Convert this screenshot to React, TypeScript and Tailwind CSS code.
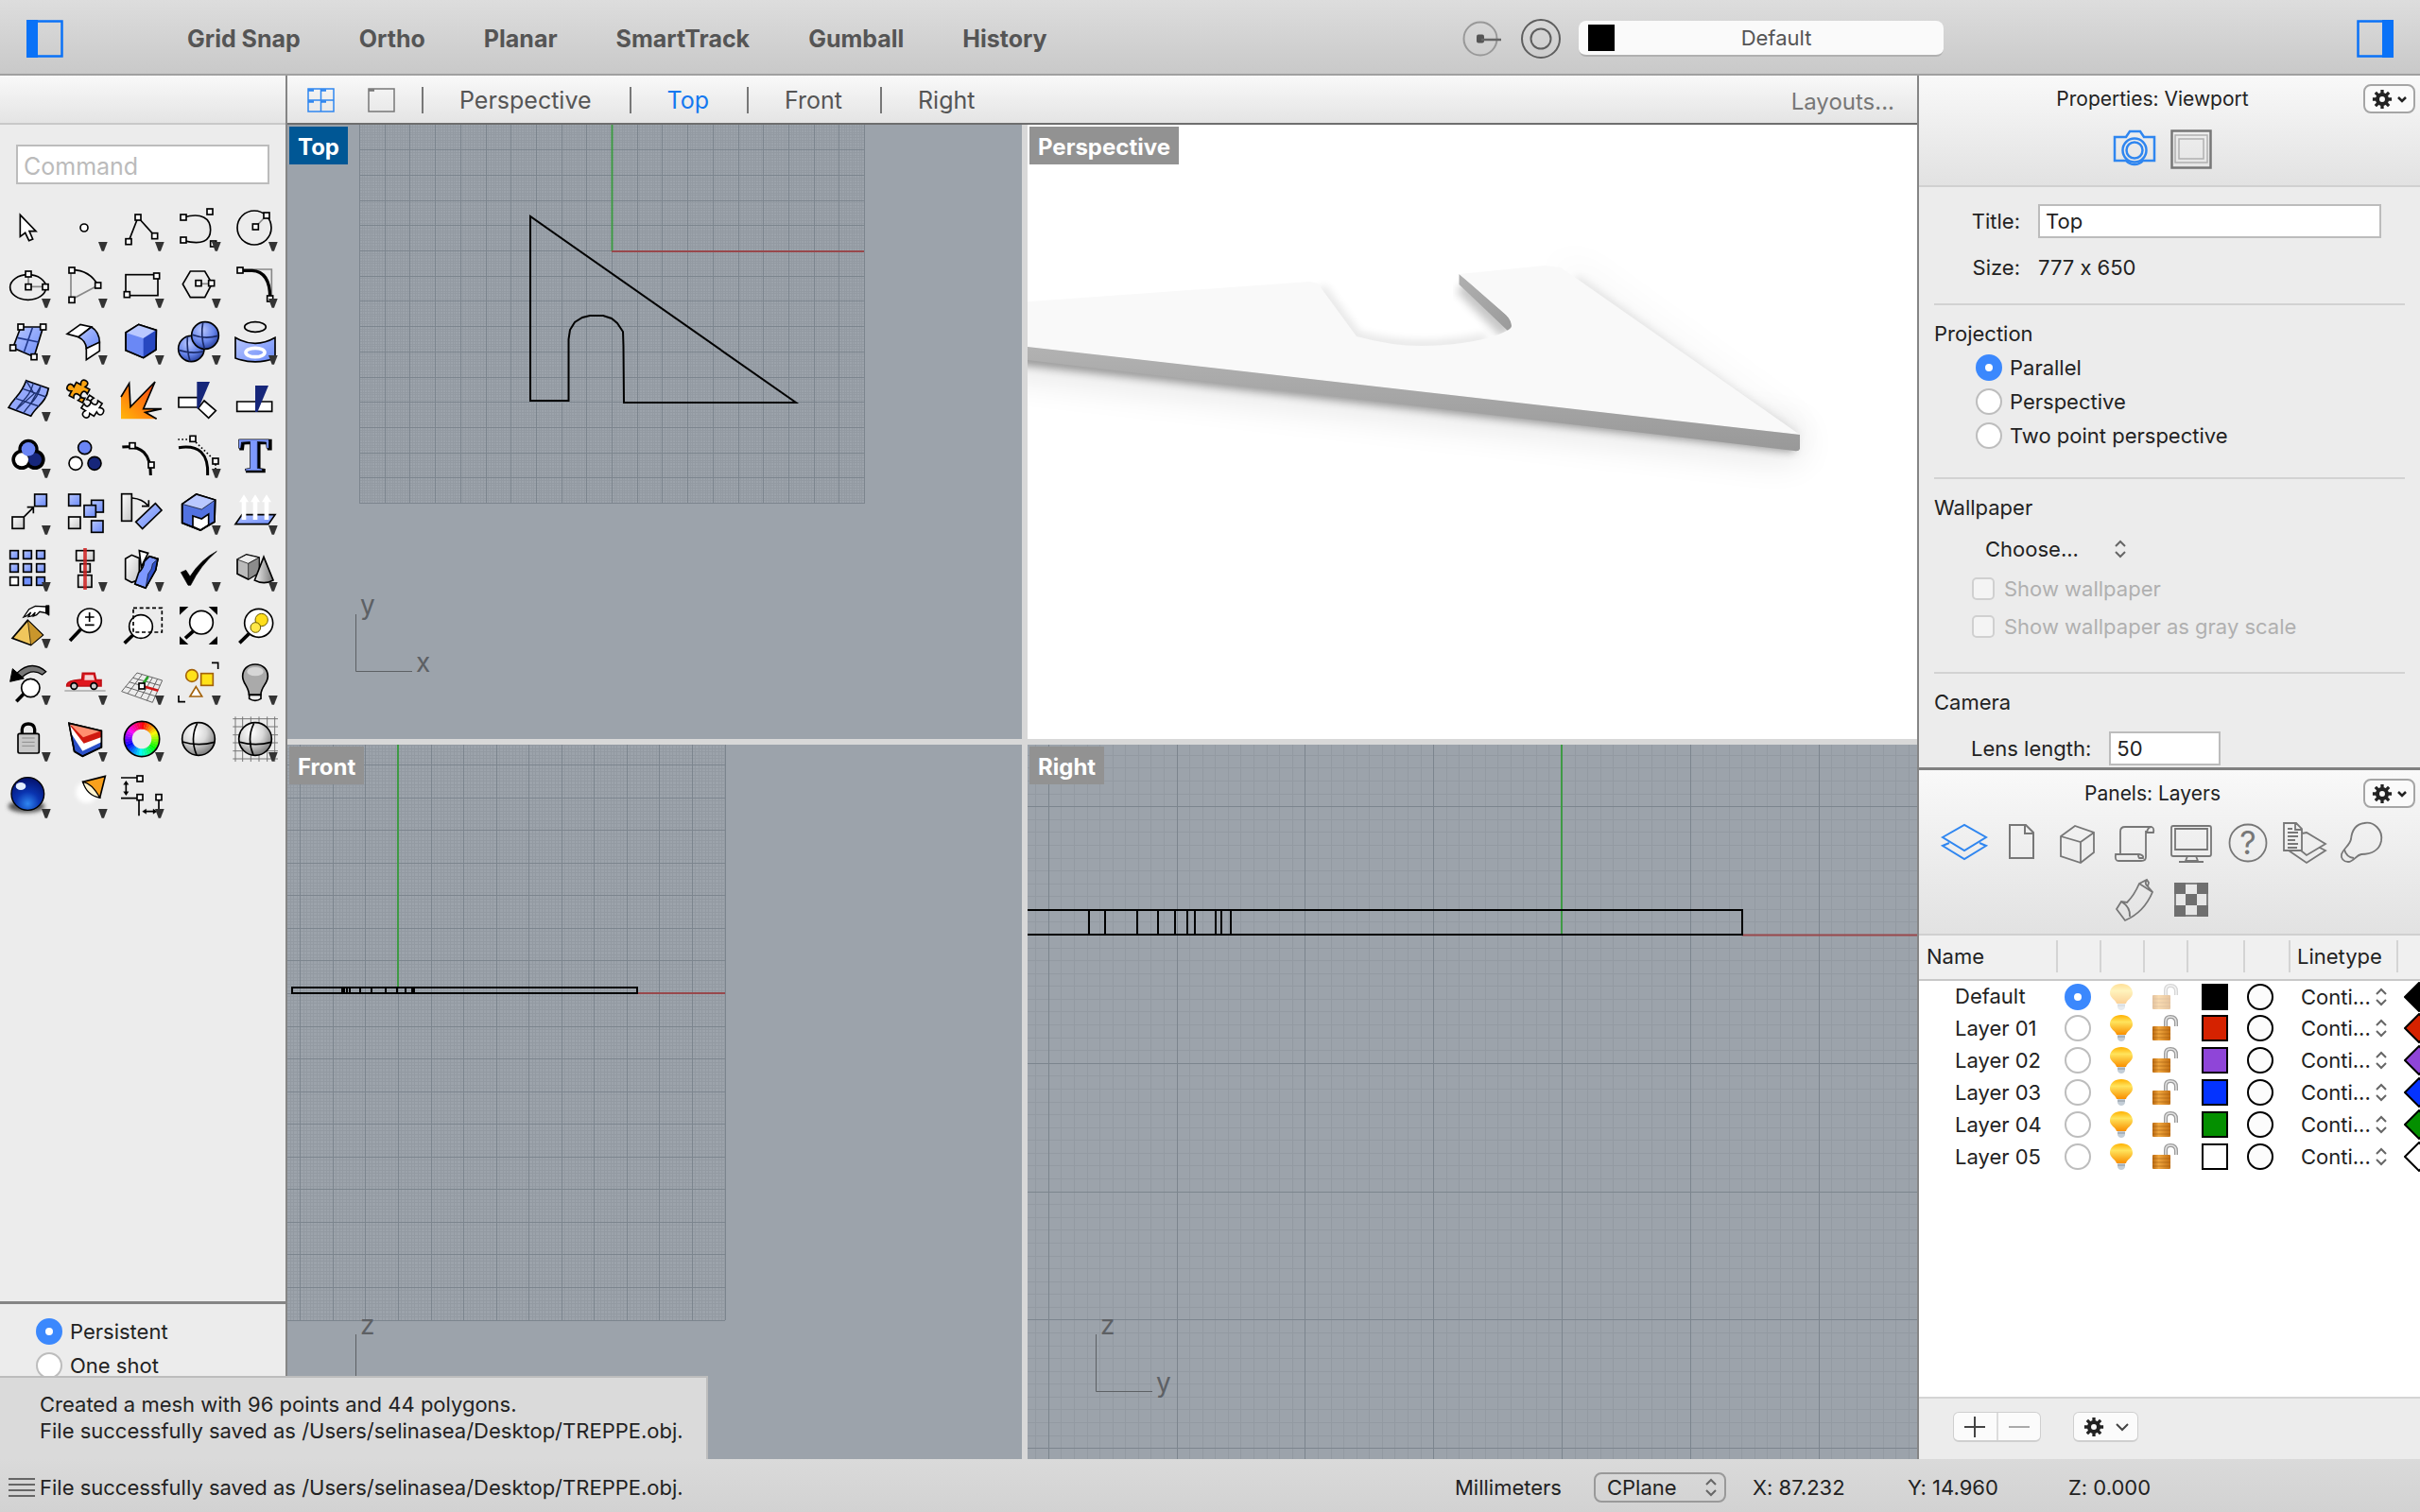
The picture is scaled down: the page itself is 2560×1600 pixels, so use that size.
import React from 'react';

const TOGGLES = ['Grid Snap', 'Ortho', 'Planar', 'SmartTrack', 'Gumball', 'History'];
const VIEW_TABS = ['Perspective', 'Top', 'Front', 'Right'];
const PROJECTIONS = ['Parallel', 'Perspective', 'Two point perspective'];

const LAYERS = [
  { name: 'Default', color: '#000000', current: true },
  { name: 'Layer 01', color: '#d52200', current: false },
  { name: 'Layer 02', color: '#8f45d8', current: false },
  { name: 'Layer 03', color: '#0433ff', current: false },
  { name: 'Layer 04', color: '#048f00', current: false },
  { name: 'Layer 05', color: '#ffffff', current: false },
];

const radioClass =
  'size-7 shrink-0 appearance-none rounded-full border-2 border-[#bdbdbd] bg-white checked:border-[10px] checked:border-[#3b88fd]';

/* ---------- shared icon parts ---------- */

const Handle: React.FC<{ x: number; y: number }> = ({ x, y }) => (
  <rect x={x - 9} y={y - 9} width={18} height={18} fill="#fff" stroke="#000" strokeWidth={5} />
);

const Box: React.FC<{ x: number; y: number; w: number; h?: number; fill?: string }> = ({ x, y, w, h, fill = 'url(#blue)' }) => (
  <rect x={x} y={y} width={w} height={h ?? w} fill={fill} />
);

const Gradients = () => (
  <svg className="absolute size-0" aria-hidden="true">
    <defs>
      <linearGradient id="blue" x1="0" y1="0" x2="1" y2="1">
        <stop offset="0" stopColor="#b9c8ff" />
        <stop offset="1" stopColor="#6a8af8" />
      </linearGradient>
      <linearGradient id="grey" x1="0" y1="0" x2="1" y2="1">
        <stop offset="0" stopColor="#ffffff" />
        <stop offset="1" stopColor="#c4c4c4" />
      </linearGradient>
      <linearGradient id="cone" x1="0" y1="0" x2="1" y2="0">
        <stop offset="0" stopColor="#efefef" />
        <stop offset="1" stopColor="#777" />
      </linearGradient>
      <linearGradient id="fire" x1="0" y1="1" x2="1" y2="0">
        <stop offset="0" stopColor="#ffb60a" />
        <stop offset="1" stopColor="#ff3a12" />
      </linearGradient>
      <linearGradient id="amber" x1="0" y1="0" x2="0" y2="1">
        <stop offset="0" stopColor="#ffb000" />
        <stop offset="0.35" stopColor="#ffe45c" />
        <stop offset="1" stopColor="#f98f00" />
      </linearGradient>
      <linearGradient id="brass" x1="0" y1="0" x2="1" y2="0">
        <stop offset="0" stopColor="#b9680f" />
        <stop offset="0.35" stopColor="#f0a63e" />
        <stop offset="1" stopColor="#c26f12" />
      </linearGradient>
      <radialGradient id="ballBlue" cx="0.38" cy="0.3" r="0.75">
        <stop offset="0" stopColor="#b9c8ff" />
        <stop offset="0.6" stopColor="#6482e8" />
        <stop offset="1" stopColor="#243c9a" />
      </radialGradient>
      <radialGradient id="ballGrey" cx="0.38" cy="0.3" r="0.8">
        <stop offset="0" stopColor="#ffffff" />
        <stop offset="0.45" stopColor="#dadada" />
        <stop offset="1" stopColor="#666" />
      </radialGradient>
      <radialGradient id="ballDeep" cx="0.5" cy="0.8" r="0.8">
        <stop offset="0" stopColor="#2f86f0" />
        <stop offset="0.45" stopColor="#0a34b0" />
        <stop offset="1" stopColor="#04106a" />
      </radialGradient>
      <filter id="soft" x="-50%" y="-50%" width="200%" height="200%">
        <feGaussianBlur stdDeviation="7" />
      </filter>
    </defs>
  </svg>
);

/* ---------- tool palette ---------- */

type Tool = { label: string; menu?: boolean; art: React.ReactNode };

const wheel = Array.from({ length: 36 }, (_, i) => {
  const a = ((i * 10 - 90) * Math.PI) / 180;
  const b = ((i * 10 - 79) * Math.PI) / 180;
  const d = `M${450 + 43 * Math.cos(a)} ${786 + 43 * Math.sin(a)} A43 43 0 0 1 ${450 + 43 * Math.cos(b)} ${786 + 43 * Math.sin(b)}`;
  return <path key={i} d={d} stroke={`hsl(${i * 10} 95% 50%)`} strokeWidth={24} fill="none" />;
});

const JIGSAW =
  'M-24 -24H-8C-15 -36 -9 -43 0 -43C9 -43 15 -36 8 -24H24V-8C12 -15 7 -9 7 0C7 9 12 15 24 8V24H8C15 12 9 7 0 7C-9 7 -15 12 -8 24H-24V8C-36 15 -43 9 -43 0C-43 -9 -36 -15 -24 -8Z';

// The palette art sits on two sheets of 180-unit cells: rows 0-4 on the first, the rest on the second.
const TOOLS: Tool[] = [
  { label: 'Select', art: <path d="M64 82V151L80 139L92 164L104 159L93 134H114Z" fill="#fff" /> },
  { label: 'Point', menu: true, art: <circle cx={267} cy={123} r={12} fill="#fff" /> },
  {
    label: 'Polyline',
    menu: true,
    art: (
      <>
        <path d="M408 167L438 90L491 149" />
        <Handle x={408} y={167} />
        <Handle x={438} y={90} />
        <Handle x={491} y={149} />
      </>
    ),
  },
  {
    label: 'Curve',
    menu: true,
    art: (
      <>
        <path d="M582 90C640 74 668 92 668 130C668 166 640 178 582 164" />
        <Handle x={582} y={90} />
        <Handle x={582} y={162} />
        <Handle x={666} y={72} />
        <Handle x={677} y={174} />
      </>
    ),
  },
  {
    label: 'Circle',
    menu: true,
    art: (
      <>
        <circle cx={807} cy={123} r={54} />
        <path d="M811 120L846 84" stroke="#888" />
        <Handle x={811} y={120} />
        <Handle x={846} y={84} />
      </>
    ),
  },
  {
    label: 'Ellipse',
    menu: true,
    art: (
      <>
        <ellipse cx={89} cy={312} rx={57} ry={40} />
        <path d="M90 270V310H144" stroke="#888" />
        <Handle x={90} y={270} />
        <Handle x={90} y={311} />
        <Handle x={144} y={311} />
      </>
    ),
  },
  {
    label: 'Arc',
    menu: true,
    art: (
      <>
        <path d="M311 306L225 352V258" stroke="#888" />
        <path d="M228 256Q286 258 311 306" />
        <Handle x={228} y={258} />
        <Handle x={228} y={352} />
        <Handle x={311} y={306} />
      </>
    ),
  },
  {
    label: 'Rectangle',
    menu: true,
    art: (
      <>
        <rect x={399} y={272} width={102} height={66} />
        <Handle x={497} y={276} />
        <Handle x={403} y={335} />
      </>
    ),
  },
  {
    label: 'Polygon',
    menu: true,
    art: (
      <>
        <path d="M580 302L604 261H650L673 300L650 344H604Z" />
        <path d="M630 301H671" stroke="#888" />
        <Handle x={630} y={299} />
        <Handle x={671} y={299} />
      </>
    ),
  },
  {
    label: 'Fillet',
    menu: true,
    art: (
      <>
        <path d="M761 255H862V350" stroke="#888" />
        <path d="M761 259H800Q857 262 857 345" strokeWidth={10} />
        <Handle x={762} y={258} />
        <Handle x={857} y={348} />
      </>
    ),
  },
  {
    label: 'Surface from points',
    menu: true,
    art: (
      <>
        <path d="M66 438H137L108 533L41 504Z" fill="url(#blue)" />
        <path d="M103 440L76 518M55 472L122 486" stroke="#223a8c" />
        <Handle x={66} y={438} />
        <Handle x={137} y={438} />
        <Handle x={41} y={504} />
        <Handle x={108} y={533} />
      </>
    ),
  },
  {
    label: 'Blend surface',
    menu: true,
    art: (
      <>
        <path d="M213 460L255 430L290 438L249 470Z" fill="#fff" />
        <path d="M249 470L290 438Q316 454 316 488L274 506Q273 482 249 470Z" fill="url(#blue)" />
        <path d="M274 506L316 486V514L274 542Z" fill="#fff" />
      </>
    ),
  },
  {
    label: 'Box',
    menu: true,
    art: (
      <>
        <path d="M399 456L440 430L496 448L495 510L455 536L399 512Z" fill="#6a88f5" />
        <path d="M399 456L440 430L496 448L455 474Z" fill="#b9c8ff" stroke="none" />
        <path d="M455 474L496 448L495 510L455 536Z" fill="#2747c0" stroke="none" />
        <path d="M399 456L440 430L496 448L495 510L455 536L399 512Z" />
      </>
    ),
  },
  {
    label: 'Boolean union',
    menu: true,
    art: (
      <>
        <circle cx={607} cy={507} r={41} fill="url(#ballBlue)" />
        <path d="M595 468Q592 510 603 547M568 512Q606 524 645 516" stroke="#1a2a66" />
        <circle cx={651} cy={465} r={43} fill="url(#ballBlue)" />
        <path d="M644 424Q636 465 649 507M610 463Q650 478 692 466" stroke="#1a2a66" />
      </>
    ),
  },
  {
    label: 'Project curves',
    menu: true,
    art: (
      <>
        <ellipse cx={810} cy={438} rx={34} ry={16} />
        <path d="M747 472Q810 508 873 472V537Q810 560 747 537Z" fill="url(#blue)" />
        <ellipse cx={810} cy={519} rx={30} ry={14} stroke="#fff" strokeWidth={11} />
      </>
    ),
  },
  {
    label: 'Mesh',
    menu: true,
    art: (
      <>
        <path d="M83 608L154 633C146 680 116 688 98 721L27 694C44 662 66 656 83 608Z" fill="#93a8fb" />
        <path
          d="M106 616C94 662 70 670 50 702M130 624C120 668 94 680 74 712M72 634L146 660M48 664L124 690M83 608L108 650L50 702M130 624L98 680"
          stroke="#1d3070"
          strokeWidth={4}
        />
      </>
    ),
  },
  {
    label: 'Join',
    art: (
      <>
        <path d={JIGSAW} transform="translate(252 646) rotate(28)" fill="#f9a312" />
        <path d={JIGSAW} transform="translate(291 688) rotate(213)" fill="#fff" />
      </>
    ),
  },
  {
    label: 'Explode',
    art: (
      <>
        <path d="M384 660L410 617L414 692L492 612L455 698L513 698L461 709L497 730H384Z" fill="url(#fire)" stroke="none" />
        <path d="M384 660L410 617L414 692L492 612L455 698L513 698L461 709L497 730" />
      </>
    ),
  },
  {
    label: 'Trim',
    art: (
      <>
        <path d="M567 662H629V693H567Z" fill="#fff" />
        <path d="M629 696L648 672L685 704L662 727Z" fill="#fff" />
        <path d="M625 612H666L630 697H625Z" fill="#16267a" stroke="none" />
      </>
    ),
  },
  {
    label: 'Split',
    art: (
      <>
        <path d="M752 675H863V706H752Z" fill="#fff" />
        <path d="M810 624H852L817 708H810Z" fill="#16267a" stroke="none" />
      </>
    ),
  },
  {
    label: 'Group',
    menu: true,
    art: (
      <>
        <g strokeWidth={16}>
          <circle cx={90} cy={826} r={24} />
          <circle cx={69} cy={859} r={24} />
          <circle cx={111} cy={859} r={24} />
        </g>
        <g stroke="none">
          <circle cx={111} cy={859} r={21} fill="#16267a" />
          <circle cx={69} cy={859} r={21} fill="#fff" />
          <circle cx={90} cy={826} r={22} fill="#6a85f5" />
        </g>
      </>
    ),
  },
  {
    label: 'Ungroup',
    art: (
      <>
        <circle cx={269} cy={821} r={21} fill="#6a85f5" />
        <circle cx={240} cy={871} r={21} fill="#fff" />
        <circle cx={300} cy={871} r={21} fill="#16267a" />
      </>
    ),
  },
  {
    label: 'Edit points',
    art: (
      <>
        <path d="M388 819Q480 808 478 909" strokeWidth={9} />
        <Handle x={420} y={815} />
        <Handle x={480} y={876} />
      </>
    ),
  },
  {
    label: 'Control points',
    menu: true,
    art: (
      <>
        <path d="M567 821Q664 806 659 909" strokeWidth={9} />
        <path d="M565 795H612L684 864V910" strokeDasharray="5 7" />
        <Handle x={612} y={793} />
        <Handle x={684} y={864} />
      </>
    ),
  },
  {
    label: 'Text',
    art: (
      <g fontFamily="Liberation Serif" fontWeight={700} fontSize={150} textAnchor="middle">
        <text x={811} y={897} fill="#2747c0" strokeWidth={8}>T</text>
        <text x={805} y={893} fill="#7d98ff" strokeWidth={2}>T</text>
      </g>
    ),
  },
  {
    label: 'Move',
    menu: true,
    art: (
      <>
        <Box x={110} y={9} w={38} />
        <Box x={39} y={81} w={37} fill="url(#grey)" />
        <path d="M77 80L104 53M86 50H106V70" />
      </>
    ),
  },
  {
    label: 'Copy',
    art: (
      <>
        <Box x={218} y={9} w={37} />
        <Box x={218} y={81} w={37} fill="url(#grey)" />
        <Box x={290} y={28} w={38} />
        <Box x={267} y={44} w={37} />
        <Box x={290} y={93} w={37} />
      </>
    ),
  },
  {
    label: 'Rotate',
    art: (
      <>
        <Box x={386} y={8} w={32} h={86} fill="url(#grey)" />
        <path d="M420 21Q452 24 470 45M450 47H472V28" />
        <path d="M493 38L513 60L452 119L431 97Z" fill="url(#blue)" />
      </>
    ),
  },
  {
    label: 'Boolean difference',
    menu: true,
    art: (
      <>
        <path d="M578 40L623 9L683 27L681 97L636 123L578 100Z" fill="#5272e0" />
        <path d="M578 40L623 9L683 27L640 57Z" fill="#b9c8ff" strokeWidth={2} />
        <path d="M612 78L640 87L662 72V106L637 123L612 112Z" fill="#fff" />
        <path d="M578 40L623 9L683 27L681 97L636 123L578 100Z" />
      </>
    ),
  },
  {
    label: 'Extrude',
    menu: true,
    art: (
      <>
        <path d="M768 74H873L852 104H747Z" fill="url(#blue)" />
        {[774, 810, 846].map(x => (
          <path key={x} d={`M${x - 7} 90V34H${x - 15}L${x} 10L${x + 15} 34H${x + 7}V90Z`} fill="#fff" stroke="none" />
        ))}
      </>
    ),
  },
  {
    label: 'Array',
    menu: true,
    art: (
      <>
        {[188, 230, 272].map(y =>
          [32, 74, 116].map(x => (
            <Box key={`${x}-${y}`} x={x} y={y} w={26} fill={y === 272 ? (x === 32 ? '#fff' : '#7090ff') : 'url(#blue)'} />
          )),
        )}
      </>
    ),
  },
  {
    label: 'Align',
    menu: true,
    art: (
      <>
        <Box x={242} y={188} w={56} h={32} fill="url(#grey)" />
        <Box x={255} y={230} w={31} h={26} fill="url(#grey)" />
        <Box x={248} y={266} w={43} h={38} fill="url(#grey)" />
        <path d="M270 180V312" stroke="#cf1f1f" strokeOpacity={0.85} strokeWidth={11} />
      </>
    ),
  },
  {
    label: 'Bend',
    menu: true,
    art: (
      <>
        <path d="M442 188L470 196L448 240Z" fill="#fff" />
        <path d="M398 214L418 202L442 212V280L418 289L398 278Z" fill="url(#grey)" />
        <path d="M458 222L474 206L501 214L494 250L462 307L428 294L440 258Q456 244 458 222Z" fill="#7d98ff" />
        <path d="M501 214L494 250L462 307L470 262Q484 246 484 230Z" fill="#2f50c8" strokeWidth={2} />
        <path d="M458 222L474 206L501 214L494 250L462 307L428 294" />
      </>
    ),
  },
  { label: 'Check', menu: true, art: <path d="M574 257L590 250L603 270Q638 216 688 190Q636 234 605 298H597Z" fill="#000" strokeWidth={2} /> },
  {
    label: 'Solids',
    menu: true,
    art: (
      <>
        <path d="M753 216L782 201L822 210V258L788 279L753 262Z" fill="#bbb" />
        <path d="M753 216L782 201L822 210L788 229Z" fill="#eee" strokeWidth={2} />
        <path d="M788 229L822 210V258L788 279Z" fill="#8c8c8c" strokeWidth={2} />
        <path d="M837 208L867 282Q838 298 808 282Z" fill="url(#cone)" />
      </>
    ),
  },
  {
    label: 'Transform by hand',
    menu: true,
    art: (
      <>
        <path d="M88 409L136 456L98 488L39 466Z" fill="#f0c65c" />
        <path d="M88 409L136 456L98 488Z" fill="#c9962c" strokeWidth={2} />
        <path d="M146 366L112 364L92 374L75 399L84 396L98 384L90 398L100 396L112 384L106 396L116 392L126 382L146 386Z" fill="#fff" strokeWidth={4} />
        <path d="M146 362H156V394L146 388Z" fill="#000" strokeWidth={2} />
      </>
    ),
  },
  {
    label: 'Zoom in and out',
    art: (
      <>
        <path d="M256 438L222 474" strokeWidth={11} />
        <circle cx={284} cy={410} r={38} fill="#fff" />
        <path d="M284 384V414M270 399H299M270 424H299" />
      </>
    ),
  },
  {
    label: 'Zoom window',
    art: (
      <>
        <path d="M422 456L395 482" strokeWidth={11} />
        <circle cx={447} cy={429} r={37} fill="#fff" />
        <rect x={423} y={370} width={91} height={77} strokeDasharray="12 8" />
      </>
    ),
  },
  {
    label: 'Zoom extents',
    art: (
      <>
        <path d="M613 444L588 466" strokeWidth={11} />
        <circle cx={639} cy={416} r={37} fill="#fff" />
        <path d="M570 366H598L570 392ZM690 366H662L690 392ZM570 486H598L570 460ZM690 486H662L690 460Z" fill="#000" stroke="none" />
      </>
    ),
  },
  {
    label: 'Zoom selected',
    art: (
      <>
        <path d="M790 452L760 481" strokeWidth={11} />
        <circle cx={821} cy={418} r={45} fill="#fff" />
        <g stroke="#6b5a00" strokeWidth={3}>
          <circle cx={830} cy={408} r={20} fill="#ffde1a" />
          <circle cx={811} cy={432} r={16} fill="#ffe84a" />
        </g>
      </>
    ),
  },
  {
    label: 'Undo view',
    menu: true,
    art: (
      <>
        <path d="M76 642L52 667" strokeWidth={11} />
        <circle cx={97} cy={624} r={29} fill="#fff" />
        <path d="M52 578Q100 532 146 572L134 582Q102 560 70 590Z" fill="#777" strokeWidth={4} />
        <path d="M40 563L32 604L76 594Z" fill="#000" strokeWidth={3} />
      </>
    ),
  },
  {
    label: 'Named views',
    menu: true,
    art: (
      <>
        <path d="M205 633H335" stroke="#aaa" strokeWidth={4} />
        <path d="M212 618Q210 604 236 600L260 597L262 577H300L305 599H321V618Z" fill="#e0151c" stroke="#c01016" />
        <path d="M269 583H296L300 599H268Z" fill="#f3d5d5" stroke="none" />
        <circle cx={235} cy={618} r={10} fill="#ccc" />
        <circle cx={298} cy={618} r={10} fill="#ccc" />
      </>
    ),
  },
  {
    label: 'Construction plane',
    menu: true,
    art: (
      <>
        <path
          d="M435 576L515 600L484 670L386 635ZM451 581L405 642M468 586L428 650M484 591L446 656M500 595L466 664M422 592L508 616M410 605L501 632M398 620L493 650"
          stroke="#666"
          strokeWidth={3}
        />
        <path d="M450 617L470 588" stroke="#28a428" strokeWidth={8} />
        <path d="M450 617L502 632" stroke="#d01616" strokeWidth={8} />
        <Handle x={450} y={618} />
      </>
    ),
  },
  {
    label: 'Selection filter',
    menu: true,
    art: (
      <>
        <path d="M672 544H692V564M567 648V668H588" />
        <g stroke="#a3620c" strokeWidth={5}>
          <circle cx={609} cy={585} r={19} fill="#ffe21a" />
          <rect x={638} y={578} width={38} height={38} fill="#ffe21a" />
          <path d="M622 620L641 651H603Z" fill="#fff" />
        </g>
      </>
    ),
  },
  {
    label: 'Hide',
    menu: true,
    art: (
      <>
        <path d="M791 646H828V658Q810 670 791 658Z" fill="#eee" />
        <path d="M810 549C785 549 770 566 770 587C770 610 790 620 790 645H828C828 620 850 610 850 587C850 566 835 549 810 549Z" fill="#aaa" />
        <ellipse cx={810} cy={572} rx={26} ry={14} fill="#d6d6d6" stroke="none" />
      </>
    ),
  },
  {
    label: 'Lock',
    menu: true,
    art: (
      <>
        <path d="M70 770V755Q72 738 90 738Q108 738 110 755V770" strokeWidth={10} />
        <rect x={57} y={769} width={67} height={62} rx={5} fill="#c8c8c8" />
        <path d="M70 783H110M70 796H110M70 808H110" stroke="#8d8d8d" strokeWidth={3} />
      </>
    ),
  },
  {
    label: 'Layer',
    menu: true,
    art: (
      <>
        <path d="M219 736L322 760V812L262 841L236 826Z" fill="#2b50c8" />
        <path d="M224 766L262 824L322 796V762L219 740Z" fill="#fff" stroke="none" />
        <path d="M221 742L266 800L322 780V760Z" fill="#d01a10" stroke="none" />
        <path d="M219 736L322 760L264 781Z" fill="#ff8f70" stroke="none" />
        <path d="M219 736L322 760V812L262 841L236 826Z" />
      </>
    ),
  },
  {
    label: 'Object color',
    menu: true,
    art: (
      <>
        {wheel}
        <circle cx={450} cy={786} r={56} />
      </>
    ),
  },
  {
    label: 'Shade',
    art: (
      <>
        <circle cx={630} cy={786} r={52} fill="url(#ballGrey)" />
        <path d="M626 736Q602 784 624 837M579 795Q628 810 681 796" />
      </>
    ),
  },
  {
    label: 'Render preview',
    menu: true,
    art: (
      <>
        <path
          d="M747 715V858M770 715V858M796 715V858M822 715V858M848 715V858M872 715V858M739 722H882M739 747H882M739 773H882M739 798H882M739 824H882M739 849H882"
          stroke="#777"
          strokeWidth={3}
        />
        <circle cx={810} cy={786} r={52} fill="url(#ballGrey)" />
        <path d="M806 736Q782 784 804 837M759 795Q808 810 861 796" />
      </>
    ),
  },
  {
    label: 'Render',
    menu: true,
    art: (
      <>
        <ellipse cx={84} cy={1000} rx={58} ry={20} fill="#555" stroke="none" filter="url(#soft)" />
        <circle cx={88} cy={960} r={52} fill="url(#ballDeep)" strokeWidth={4} />
        <ellipse cx={66} cy={936} rx={16} ry={12} fill="#e4efff" stroke="none" />
      </>
    ),
  },
  {
    label: 'Spotlight',
    menu: true,
    art: (
      <>
        <ellipse cx={275} cy={955} rx={34} ry={34} fill="#fff" stroke="none" filter="url(#soft)" />
        <path d="M334 904L263 922Q280 960 317 972Z" fill="#f9a01c" />
        <path d="M263 922Q290 925 317 972Q276 966 263 922Z" fill="#fff3cf" strokeWidth={4} />
      </>
    ),
  },
  {
    label: 'Dimension',
    menu: true,
    art: (
      <>
        <path d="M384 909H436M384 974H436M400 924V960M441 980V1030M504 980V1008M458 1016H492" />
        <path d="M400 919L392 931H408ZM400 965L392 953H408ZM452 1016L464 1008V1024ZM498 1016L486 1008V1024Z" fill="#000" strokeWidth={1} />
        <Handle x={444} y={912} />
        <Handle x={444} y={971} />
        <Handle x={504} y={971} />
      </>
    ),
  },
];

const ToolPalette = () => (
  <div className="grid w-[300px] grid-cols-5">
    {TOOLS.map((tool, i) => {
      const row = Math.floor(i / 5);
      const left = (i % 5) * 180;
      const top = row < 5 ? 33 + row * 180 : row * 180 - 927;
      return (
        <button key={tool.label} type="button" aria-label={tool.label} className="size-[60px]">
          <svg viewBox={`${left} ${top} 180 180`} className="size-full" fill="none" stroke="#000" strokeWidth={5}>
            {tool.art}
            {tool.menu && <path d={`M${left + 132} ${top + 135}h29l-11 29h-7z`} fill="#333" stroke="none" />}
          </svg>
        </button>
      );
    })}
  </div>
);

/* ---------- viewports ---------- */

type GridProps = { ox: number; oy: number; step: number; x0: number; x1: number; y0: number; y1: number };

const gridPath = ({ ox, oy, step, x0, x1, y0, y1 }: GridProps) => {
  let d = '';
  for (let i = Math.ceil((x0 - ox) / step - 0.01); ox + i * step <= x1 + 0.5; i++) {
    d += `M${Math.round(ox + i * step) + 0.5} ${y0}V${y1}`;
  }
  for (let i = Math.ceil((y0 - oy) / step - 0.01); oy + i * step <= y1 + 0.5; i++) {
    d += `M${x0} ${Math.round(oy + i * step) + 0.5}H${x1}`;
  }
  return d;
};

const Grid: React.FC<GridProps> = props => (
  <g fill="none">
    <path d={gridPath({ ...props, step: props.step / 10 })} stroke="#939aa2" />
    <path d={gridPath(props)} stroke="#7c858e" />
  </g>
);

const AxisIcon: React.FC<{ top: number; across?: string; up: string }> = ({ top, across, up }) => (
  <g fill="#5d6064" fontSize={28}>
    <path d={`M72.5 ${top}V${top + 60.5}H132`} fill="none" stroke="#5d6064" />
    <text x={77} y={top}>{up}</text>
    {across && <text x={136} y={top + 61}>{across}</text>}
  </g>
);

const Viewport: React.FC<{ title: string; active?: boolean; white?: boolean; children: React.ReactNode }> = ({
  title,
  active,
  white,
  children,
}) => (
  <section aria-label={`${title} viewport`} className={`relative min-h-0 overflow-hidden ${white ? 'bg-white' : 'bg-[#9ca3ab]'}`}>
    <svg className="absolute inset-0 size-full">{children}</svg>
    <h2
      className={`absolute top-[2px] left-[2px] h-10 px-[9px] text-[24px] leading-[43px] font-bold text-white ${active ? 'bg-[#005795]' : 'bg-[#929292]'}`}
    >
      {title}
    </h2>
  </section>
);

const Slab: React.FC<{ marks: number[]; x0: number; x1: number; y0: number; y1: number }> = ({ marks, x0, x1, y0, y1 }) => (
  <g fill="none" stroke="#000" strokeWidth={2}>
    <rect x={x0} y={y0} width={x1 - x0} height={y1 - y0} />
    <path d={marks.map(x => `M${x} ${y0}V${y1}`).join('')} />
  </g>
);

const Viewports = () => (
  <div className="grid min-h-0 flex-1 grid-cols-[777fr_941fr] grid-rows-[650fr_756fr] gap-[6px] bg-[#d8d8d8]">
    <Viewport title="Top" active>
      <Grid ox={343} oy={133} step={26.7} x0={76} x1={611} y0={0} y1={401} />
      <path d="M343.5 0V134" stroke="#3f9a45" strokeWidth={2} />
      <path d="M343 134H610" stroke="#98484c" strokeWidth={2} />
      <path
        d="M257 97V292H297.5V227L299 217L304 209L312 204L320 202H334L343 205L349 210L355 219L355.5 234L356 294H538Z"
        fill="none"
        stroke="#000"
        strokeWidth={2}
      />
      <AxisIcon top={518} across="x" up="y" />
    </Viewport>

    <Viewport title="Perspective" white>
      <defs>
        <linearGradient id="side" x1="0" y1="0" x2="0.02" y2="1">
          <stop offset="0" stopColor="#b2b2b2" />
          <stop offset="1" stopColor="#999999" />
        </linearGradient>
        <linearGradient id="notch" x1="0" y1="0" x2="1" y2="1">
          <stop offset="0" stopColor="#b0b0b0" />
          <stop offset="1" stopColor="#9a9a9a" />
        </linearGradient>
        <filter id="wide" x="-20%" y="-60%" width="140%" height="220%">
          <feGaussianBlur stdDeviation="20" />
        </filter>
        <filter id="tight" x="-20%" y="-40%" width="140%" height="180%">
          <feGaussianBlur stdDeviation="5" />
        </filter>
      </defs>
      <g fill="none" stroke="#000">
        <path d="M-60 240L816 338" strokeWidth={30} opacity={0.13} filter="url(#wide)" />
        <path d="M816 332L566 151" strokeWidth={16} opacity={0.06} filter="url(#wide)" />
        <path d="M-40 244L811 340" strokeWidth={12} opacity={0.38} filter="url(#tight)" />
        <path d="M580 163L814 330" strokeWidth={7} opacity={0.12} filter="url(#tight)" />
        <path d="M310 172L348 224Q415 242 486 226" strokeWidth={10} opacity={0.1} filter="url(#tight)" />
        <path d="M460 170L508 219" strokeWidth={18} opacity={0.22} filter="url(#tight)" />
      </g>
      <path d="M456.5 158L506 201Q513 207 512 216L509 219L456.5 169Z" fill="url(#notch)" />
      <path
        d="M-10 188L299 166L307 168L348 224Q385 234 416 234Q452 234 486 226Q512 218 512 213Q512 207 506 201L457 158L547 149L564 151L817 328L-10 234Z"
        fill="#f9f9f9"
      />
      <path d="M0 235L817 328V343Q816 346 811 345L0 249Z" fill="url(#side)" />
    </Viewport>

    <Viewport title="Front">
      <Grid ox={117} oy={263} step={34.55} x0={0} x1={463} y0={0} y1={609} />
      <path d="M117 0V257" stroke="#3f9a45" strokeWidth={2} />
      <path d="M370 263H463" stroke="#98484c" strokeWidth={2} />
      <Slab x0={5} x1={370} y0={257} y1={263} marks={[58, 60, 63, 66, 77, 89, 104, 116, 125, 132, 134]} />
      <AxisIcon top={624} up="z" />
    </Viewport>

    <Viewport title="Right">
      <Grid ox={565} oy={201} step={135.8} x0={0} x1={2000} y0={0} y1={1600} />
      <path d="M565 0V201" stroke="#3f9a45" strokeWidth={2} />
      <path d="M756 201.5H2000" stroke="#98484c" strokeWidth={2} />
      <Slab x0={-4} x1={756} y0={175} y1={201} marks={[65, 82, 116, 138, 156, 169, 177, 199, 205, 215]} />
      <AxisIcon top={624} across="y" up="z" />
    </Viewport>
  </div>
);

/* ---------- small controls ---------- */

const Gear: React.FC<{ className?: string }> = ({ className }) => (
  <svg viewBox="0 0 24 24" className={className} fill="none" stroke="#222">
    <circle cx={12} cy={12} r={5.5} strokeWidth={4.5} />
    <path d="M12 1V6M12 18V23M1 12H6M18 12H23M4.2 4.2L8 8M16 16L19.8 19.8M4.2 19.8L8 16M16 8L19.8 4.2" strokeWidth={3.6} />
  </svg>
);

const Chevrons: React.FC<{ className: string }> = ({ className }) => (
  <svg viewBox="0 0 14 20" className={`pointer-events-none absolute h-5 w-[14px] ${className}`} fill="none" stroke="#666" strokeWidth={2}>
    <path d="M2 7L7 2L12 7M2 13L7 18L12 13" />
  </svg>
);

const GearMenu: React.FC<{ label: string }> = ({ label }) => (
  <button type="button" aria-label={label} className="flex h-[31px] w-[55px] items-center justify-center gap-1 rounded-lg border-2 border-[#a5a5a5] bg-[#fafafa]">
    <Gear className="size-[22px]" />
    <svg viewBox="0 0 12 12" className="size-3" fill="none" stroke="#222" strokeWidth={2.5}>
      <path d="M2 4L6 8L10 4" />
    </svg>
  </button>
);

const PanelToggle: React.FC<{ label: string; right?: boolean }> = ({ label, right }) => (
  <button type="button" aria-label={label} className="h-10 w-[39px] shrink-0">
    <svg viewBox="0 0 39 40" className="size-full" fill="none">
      <rect x={1.5} y={1.5} width={36} height={37} stroke="#0a72f7" strokeWidth={2.5} />
      <rect x={right ? 27 : 0} y={0} width={12} height={40} fill="#0a72f7" />
    </svg>
  </button>
);

/* ---------- top bar ---------- */

const TopBar = () => (
  <header className="flex h-20 shrink-0 items-center border-b-2 border-[#a0a0a0] bg-linear-to-b from-[#dddddd] to-[#c9c9c9] px-7 pt-[3px] text-[#555]">
    <PanelToggle label="Toggle left sidebar" />
    <nav className="ml-[131px] flex gap-[62px] pt-[2px] text-[25px] font-bold">
      {TOGGLES.map(name => (
        <button key={name} type="button">{name}</button>
      ))}
    </nav>
    <div className="mr-[437px] ml-auto flex items-center">
      <button type="button" aria-label="Record history" className="h-10 w-[42px]">
        <svg viewBox="0 0 42 40" className="size-full" fill="none">
          <circle cx={19} cy={20} r={17.5} stroke="#999" strokeWidth={2} />
          <rect x={15} y={15.5} width={8} height={9} rx={2} fill="#555" />
          <path d="M20 21H41" stroke="#666" strokeWidth={2.5} />
        </svg>
      </button>
      <button type="button" aria-label="Gumball target" className="ml-5 size-[42px]">
        <svg viewBox="0 0 42 42" className="size-full" fill="none" stroke="#5e5e5e" strokeWidth={2}>
          <circle cx={21} cy={21} r={20} />
          <circle cx={21} cy={21} r={10.5} />
        </svg>
      </button>
      <label className="relative ml-[19px] flex h-[38px] w-[386px] items-center rounded-lg border-b-2 border-[#b0b0b0] bg-[#fafafa] text-[22px]">
        <span className="absolute left-[10px] size-7 bg-black" />
        <select aria-label="Current layer" className="size-full appearance-none pt-[2px] pl-8 text-center">
          <option>Default</option>
        </select>
      </label>
    </div>
    <PanelToggle label="Toggle right sidebar" right />
  </header>
);

/* ---------- left sidebar ---------- */

const LeftSidebar = () => (
  <aside className="flex w-[304px] shrink-0 flex-col border-r-2 border-[#858585] bg-[#ececec]">
    <div className="h-[52px] shrink-0 border-b-2 border-[#c8c8c8] bg-linear-to-b from-[#f9f9f9] to-[#e4e4e4]" />
    <div className="px-[17px] pt-[21px] pb-4">
      <input aria-label="Command" placeholder="Command" className="h-[42px] w-full border-2 border-[#bcbcbc] bg-white px-[6px] pt-1 text-[25px] placeholder:text-[#bbb]" />
    </div>
    <ToolPalette />
    <fieldset className="mt-auto h-[167px] shrink-0 border-t-[3px] border-[#858585] pt-[11px] pl-[38px] text-[22px]">
      {['Persistent', 'One shot'].map((mode, i) => (
        <label key={mode} className="flex h-9 items-center gap-2">
          <input type="radio" name="osnap" defaultChecked={i === 0} className={radioClass} />
          {mode}
        </label>
      ))}
    </fieldset>
  </aside>
);

const ViewTabs = () => (
  <nav className="flex h-[52px] shrink-0 items-center border-b-2 border-[#6e6e6e] bg-linear-to-b from-[#f9f9f9] to-[#e4e4e4] pt-[2px] pr-6 pl-[21px] text-[25px] text-[#555]">
    <button type="button" aria-label="Four viewports" className="h-[26px] w-[29px]">
      <svg viewBox="0 0 29 26" className="size-full" fill="none" stroke="#2f86f0" strokeWidth={1.5}>
        <path d="M1 1H28V25H1ZM14.5 1V25M1 13H28" />
        <path d="M1 2.5H7M14.5 2.5H20M1 14.5H7M14.5 14.5H20" strokeWidth={2.5} />
      </svg>
    </button>
    <button type="button" aria-label="Single viewport" className="mr-7 ml-[35px] h-[26px] w-[29px]">
      <svg viewBox="0 0 29 26" className="size-full" fill="none" stroke="#777" strokeWidth={1.5}>
        <path d="M1 1H28V25H1Z" />
        <path d="M1 2.5H7" strokeWidth={2.5} />
      </svg>
    </button>
    {VIEW_TABS.map(tab => (
      <button key={tab} type="button" className={`h-7 border-l-2 border-[#777] pr-10 pl-[38px] leading-7 ${tab === 'Top' ? 'text-[#1478f0]' : ''}`}>
        {tab}
      </button>
    ))}
    <button type="button" className="ml-auto pt-[3px] text-[24px] text-[#777]">Layouts...</button>
  </nav>
);

/* ---------- properties panel ---------- */

const PanelTitle: React.FC<{ title: string }> = ({ title }) => (
  <div className="flex h-[49px] items-center pr-[5px] pl-6">
    <h2 className="flex-1 text-center text-[21px]">{title}</h2>
    <GearMenu label={`${title} options`} />
  </div>
);

const Rule = () => <hr className="mr-4 ml-4 border-t-2 border-[#d2d2d2]" />;

const Properties = () => (
  <section className="flex min-h-0 flex-col overflow-hidden border-b-[3px] border-[#808080] bg-[#ececec] text-[22px] leading-9 text-[#222]">
    <div className="h-[118px] shrink-0 border-b-2 border-[#d0d0d0] bg-linear-to-b from-[#f9f9f9] to-[#e2e2e2]">
      <PanelTitle title="Properties: Viewport" />
      <div className="flex items-center justify-center pt-2 pr-[14px]">
        <button type="button" aria-label="Viewport" className="h-11 w-[60px]">
          <svg viewBox="0 0 60 44" className="size-full" fill="none" stroke="#2f86f0" strokeWidth={2.5}>
            <path d="M9 8H21L25 2H36L40 8H51V33H39A12 12 0 0 1 21 33H9Z" />
            <circle cx={30} cy={22} r={12.5} />
            <circle cx={30} cy={22} r={8.5} />
          </svg>
        </button>
        <button type="button" aria-label="Viewport material" className="h-11 w-[60px]">
          <svg viewBox="0 0 60 44" className="size-full" fill="none" stroke="#b0b0b0" strokeWidth={1.5}>
            <rect x={9.5} y={1.5} width={41} height={39} stroke="#777" strokeWidth={2.5} />
            <rect x={13} y={6} width={34} height={29} />
            <rect x={17} y={10} width={26} height={21} />
          </svg>
        </button>
      </div>
    </div>

    <div className="shrink-0">
      <div className="grid grid-cols-[107px_1fr] items-center gap-x-[19px] pt-[18px] pr-[41px] pb-5">
        <label htmlFor="vp-title" className="text-right">Title:</label>
        <input id="vp-title" defaultValue="Top" className="h-9 w-full border-2 border-[#bcbcbc] bg-white px-[6px]" />
        <span className="pt-[13px] text-right">Size:</span>
        <span className="pt-[13px]">777 x 650</span>
      </div>
      <Rule />
      <fieldset className="pt-3 pb-[26px] pl-4">
        <legend className="float-left mt-0 w-full">Projection</legend>
        {PROJECTIONS.map((name, i) => (
          <label key={name} className="clear-both flex h-9 items-center gap-2 pl-11">
            <input type="radio" name="projection" defaultChecked={i === 0} className={radioClass} />
            {name}
          </label>
        ))}
      </fieldset>
      <Rule />
      <div className="pt-3 pb-7 pl-4">
        <h3>Wallpaper</h3>
        <div className="relative mt-2 mb-1 ml-[54px] w-[160px]">
          <select aria-label="Wallpaper" className="block h-9 w-full appearance-none">
            <option>Choose...</option>
          </select>
          <Chevrons className="top-2 right-[10px]" />
        </div>
        {['Show wallpaper', 'Show wallpaper as gray scale'].map(name => (
          <label key={name} className="flex h-10 items-center gap-[10px] pl-10 text-[#b0b0b0]">
            <input type="checkbox" disabled className="size-6 shrink-0 appearance-none rounded-[5px] border-2 border-[#d0d0d0] bg-[#f4f4f4]" />
            {name}
          </label>
        ))}
      </div>
      <Rule />
      <div className="pt-3 pl-4">
        <h3>Camera</h3>
        <div className="flex items-center gap-[19px] pt-[13px] pl-[39px]">
          <label htmlFor="lens">Lens length:</label>
          <input id="lens" defaultValue="50" className="h-9 w-[118px] border-2 border-[#bcbcbc] bg-white px-[6px]" />
        </div>
      </div>
    </div>
  </section>
);

/* ---------- layers panel ---------- */

const PANEL_ICONS = [
  {
    label: 'Layers',
    art: (
      <g stroke="#2f86f0" strokeWidth={2}>
        <path d="M7 24L30 11L53 24L30 38Z" />
        <path d="M14 30L7 33L30 47L53 33L46 30" />
      </g>
    ),
  },
  { label: 'Notes', art: <path d="M18 11H35L43 19V46H18ZM34 11V20H43" strokeWidth={2} /> },
  { label: 'Objects', art: <path d="M12 23L27 12L47 19V40L33 51L12 44ZM12 23L33 29L47 19M33 29V51" /> },
  { label: 'Scripts', art: <path d="M15 42V18Q15 13 20 13H48Q51 14 50 19H43Q44 13 48 13M42 17V45Q42 49 37 49H13Q9 49 10 42H35Q40 43 39 46H35Q33 43 35 42" /> },
  { label: 'Display', art: <path d="M9 14Q9 12 11 12H49Q51 12 51 14V42Q51 44 49 44H11Q9 44 9 42ZM13 15H47V37H13ZM26 44L24 49H37L35 44M17 50H43" /> },
  {
    label: 'Help',
    art: (
      <>
        <circle cx={30} cy={30} r={19.5} />
        <text x={30} y={42} textAnchor="middle" fontSize={34} fill="#777" stroke="none">?</text>
      </>
    ),
  },
  { label: 'Layer states', art: <path d="M8 9H21L27 15V38H8ZM20 9V16H27M12 15H17M12 19H23M12 23H23M12 27H20M12 31H23M12 35H22M27 20L32 19L52 31L32 43L26 38M13 38L32 51L52 38L46 35" /> },
  { label: 'Lights', art: <path d="M33 9C43 7 53 16 51 28C49 38 40 42 30 42C24 43 22 50 16 50C11 50 8 46 9 42C11 36 18 32 19 26C20 16 25 10 33 9ZM12 37Q14 45 22 46" /> },
  { label: 'Materials', art: <path d="M35 13L43 9L45 12L44 16L49 22C44 34 34 46 20 52L11 40L16 32L22 33C28 27 32 20 35 13ZM35 13L49 22M16 32Q26 38 25 48M43 9Q40 13 44 16" /> },
  {
    label: 'Textures',
    art: (
      <>
        <rect x={13} y={13} width={34} height={34} />
        <path d="M12 12H24V24H12ZM36 12H48V24H36ZM24 24H36V36H24ZM12 36H24V48H12ZM36 36H48V48H36Z" fill="#6f6f6f" stroke="none" />
      </>
    ),
  },
];

const LayerRow: React.FC<(typeof LAYERS)[number]> = ({ name, color, current }) => (
  <tr className="h-[34px]">
    <td className="pl-[38px]">{name}</td>
    <td>
      <input type="radio" name="current-layer" aria-label={`Make ${name} current`} defaultChecked={current} className={`mx-auto block ${radioClass}`} />
    </td>
    <td className={current ? 'opacity-40' : ''}>
      <svg viewBox="0 0 24 28" className="mx-auto h-7 w-6">
        <path d="M12 0C5 0 0 4 0 10C0 15 6 17 7 21H17C18 17 24 15 24 10C24 4 19 0 12 0Z" fill="url(#amber)" />
        <path d="M8 21H16V25Q15 28 12 28Q9 28 8 25Z" fill="#c3cdd6" />
        <path d="M8 23H16" stroke="#8b959e" />
      </svg>
    </td>
    <td className={current ? 'opacity-40' : ''}>
      <svg viewBox="0 0 28 28" className="mx-auto size-7" fill="none">
        <path d="M15 13V7Q15 2 20 2Q26 2 26 8V12" stroke="#9a9a9a" strokeWidth={4} />
        <path d="M15 13V7Q15 2 20 2Q26 2 26 8V12" stroke="#e4e4e4" strokeWidth={1.5} />
        <rect x={1} y={12} width={19} height={15} rx={1} fill="url(#brass)" />
        <path d="M1 16H20M1 20H20M1 24H20" stroke="#9a560b" strokeOpacity={0.5} />
      </svg>
    </td>
    <td>
      <button type="button" aria-label={`${name} color`} className="mx-auto block size-7 border-2 border-black" style={{ backgroundColor: color }} />
    </td>
    <td className="pr-3">
      <button type="button" aria-label={`${name} material`} className="ml-1 block size-7 rounded-full border-2 border-black bg-[#fcfcfc]" />
    </td>
    <td>
      <div className="relative pl-[13px]">
        <select aria-label={`${name} linetype`} className="block h-8 w-[94px] appearance-none">
          <option>Conti...</option>
        </select>
        <Chevrons className="top-[6px] right-[9px]" />
      </div>
    </td>
    <td className="overflow-hidden">
      <svg viewBox="0 0 32 32" className="ml-2 size-8 max-w-none">
        <path d="M1 16L16 1L31 16L16 31Z" fill={color} stroke="#000" strokeWidth={2} />
      </svg>
    </td>
  </tr>
);

const Layers = () => (
  <section className="flex min-h-0 flex-col overflow-hidden bg-white text-[22px] text-[#222]">
    <div className="h-[175px] shrink-0 border-b-2 border-[#d0d0d0] bg-linear-to-b from-[#f9f9f9] to-[#e2e2e2]">
      <PanelTitle title="Panels: Layers" />
      <div className="flex flex-wrap justify-center pr-8 pl-[18px]">
        {PANEL_ICONS.map(icon => (
          <button key={icon.label} type="button" aria-label={icon.label} className="size-[60px]">
            <svg viewBox="0 2 60 60" className="size-full" fill="none" stroke="#777" strokeWidth={1.8}>
              {icon.art}
            </svg>
          </button>
        ))}
      </div>
    </div>
    <table className="w-full table-fixed">
      <colgroup>
        <col />
        <col className="w-[46px]" />
        <col className="w-[46px]" />
        <col className="w-[46px]" />
        <col className="w-[60px]" />
        <col className="w-[48px]" />
        <col className="w-[114px]" />
        <col className="w-[25px]" />
      </colgroup>
      <thead>
        <tr className="h-[47px] border-b-2 border-[#c8c8c8] bg-[#f0f0f0] text-left">
          {['Name', '', '', '', '', '', 'Linetype', ''].map((head, i) => (
            <th key={i} className="pt-[5px] pb-[7px] font-normal">
              <div className={`h-[34px] leading-[34px] ${i === 0 ? 'pl-2' : 'border-l-2 border-[#d4d4d4] pl-[7px]'}`}>{head}</div>
            </th>
          ))}
        </tr>
      </thead>
      <tbody>
        {LAYERS.map(layer => (
          <LayerRow key={layer.name} {...layer} />
        ))}
      </tbody>
    </table>
    <div className="mt-auto flex h-[66px] shrink-0 items-center gap-[34px] border-t-2 border-[#d4d4d4] bg-[#ececec] pb-1 pl-9">
      <div className="flex h-8 w-[93px] rounded-md border border-b-2 border-[#cfcfcf] bg-[#fbfbfb]">
        <button type="button" aria-label="New layer" className="flex flex-1 items-center justify-center border-r-2 border-[#dcdcdc]">
          <svg viewBox="0 0 24 24" className="size-6" stroke="#444" strokeWidth={2}>
            <path d="M12 1V23M1 12H23" />
          </svg>
        </button>
        <button type="button" aria-label="Delete layer" className="flex flex-1 items-center justify-center">
          <svg viewBox="0 0 24 24" className="size-6" stroke="#aaa" strokeWidth={2}>
            <path d="M1 12H23" />
          </svg>
        </button>
      </div>
      <button type="button" aria-label="Layer tools" className="flex h-8 w-[69px] items-center justify-center gap-3 rounded-md border border-b-2 border-[#cfcfcf] bg-[#fbfbfb]">
        <Gear className="size-[22px]" />
        <svg viewBox="0 0 14 14" className="size-[14px]" fill="none" stroke="#444" strokeWidth={2}>
          <path d="M1 4L7 10L13 4" />
        </svg>
      </button>
    </div>
  </section>
);

/* ---------- status bar ---------- */

const StatusBar = () => (
  <footer className="flex h-14 shrink-0 items-center bg-linear-to-b from-[#dadada] to-[#d2d2d2] pt-1 pr-[280px] pl-[9px] text-[22px] text-[#222]">
    <button type="button" aria-label="Command history" className="mr-[5px] w-7">
      <svg viewBox="0 0 28 22" className="w-full" stroke="#666" strokeWidth={2}>
        <path d="M0 2H28M0 8H28M0 14H28M0 20H28" />
      </svg>
    </button>
    <span>File successfully saved as /Users/selinasea/Desktop/TREPPE.obj.</span>
    <span className="ml-auto w-[147px]">Millimeters</span>
    <div className="relative mr-7 w-[140px]">
      <select aria-label="Coordinate system" className="block h-8 w-full appearance-none rounded-lg border-2 border-[#999] pl-3 leading-7">
        <option>CPlane</option>
      </select>
      <Chevrons className="top-[6px] right-[9px]" />
    </div>
    <span className="w-[164px]">X: 87.232</span>
    <span className="w-[170px]">Y: 14.960</span>
    <span className="w-[92px] whitespace-nowrap">Z: 0.000</span>
  </footer>
);

export default function App() {
  return (
    <div className="flex h-screen flex-col overflow-hidden bg-[#ececec] font-['Inter',sans-serif] text-[#222] [font-feature-settings:'calt'_0]">
      <Gradients />
      <TopBar />
      <main className="relative flex min-h-0 flex-1">
        <LeftSidebar />
        <div className="flex min-w-0 flex-1 flex-col">
          <ViewTabs />
          <Viewports />
        </div>
        <aside className="grid w-[532px] shrink-0 grid-rows-[735fr_729fr] border-l-2 border-[#858585]">
          <Properties />
          <Layers />
        </aside>
        <div className="absolute bottom-0 left-0 h-[88px] border-t-2 border-r-2 border-[#bdbdbd] bg-[#dadada] pt-[14px] pr-[24px] pl-[42px] text-[22px] leading-7">
          <p>Created a mesh with 96 points and 44 polygons.</p>
          <p>File successfully saved as /Users/selinasea/Desktop/TREPPE.obj.</p>
        </div>
      </main>
      <StatusBar />
    </div>
  );
}
